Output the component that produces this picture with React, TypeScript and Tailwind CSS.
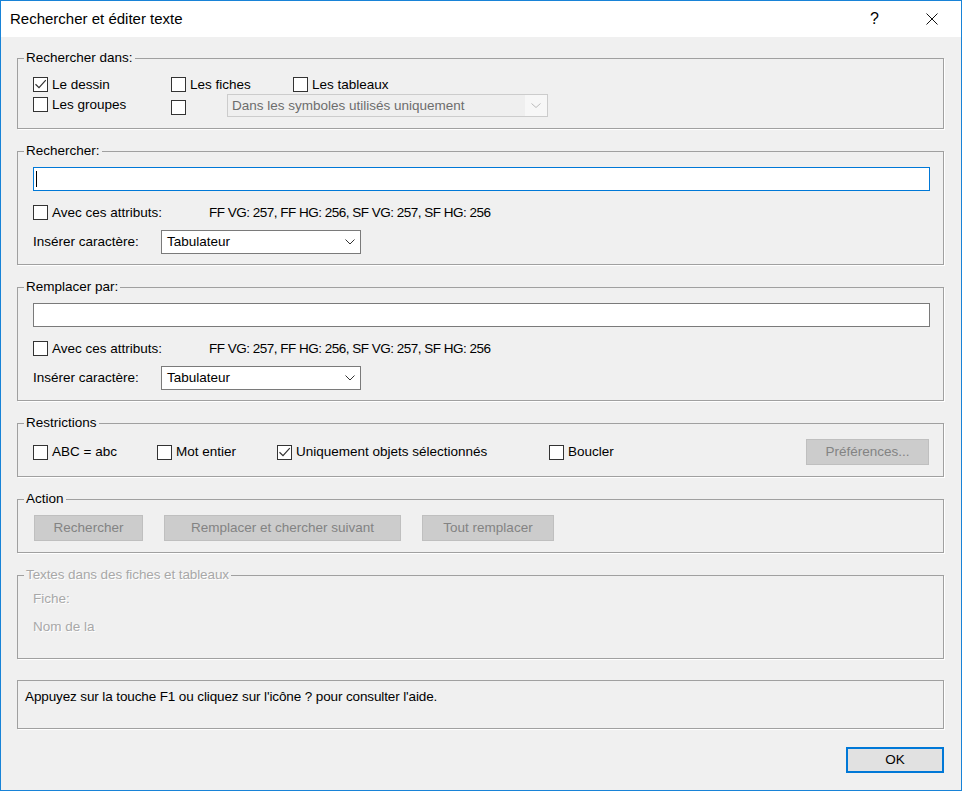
import React from 'react';

// Boîte de dialogue "Rechercher et éditer texte" (style Windows 10)

interface CheckProps {
  label?: string;
  checked?: boolean;
  className?: string;
}

function Check({ label, checked, className = '' }: CheckProps) {
  return (
    <label className={`flex items-center h-[15px] ${className}`}>
      <span className="relative w-[15px] h-[15px] shrink-0 border border-[#333333] bg-white">
        {checked && (
          <svg className="absolute left-0 top-0" width="13" height="13" viewBox="0 0 13 13">
            <path d="M1.5 6.2 L5 9.6 L11.8 2.2" fill="none" stroke="#333333" strokeWidth={1.2} />
          </svg>
        )}
      </span>
      {label && <span className="ml-[4px] whitespace-nowrap">{label}</span>}
    </label>
  );
}

interface GroupProps {
  title?: string;
  disabled?: boolean;
  className?: string;
  children: React.ReactNode;
}

function Group({ title, disabled, className = '', children }: GroupProps) {
  return (
    <fieldset className={`border border-[#a0a0a0] shadow-[1px_1px_0_#ffffff] ${className}`}>
      <legend
        className={`ml-[6px] px-[2px] h-[16px] leading-[16px] whitespace-nowrap ${
          disabled ? 'text-[#a8a8a8] tracking-[-0.1px] [text-shadow:1px_1px_0_#ffffff]' : ''
        }`}
      >
        {title}
      </legend>
      {children}
    </fieldset>
  );
}

function Combo({ value, className = '' }: { value: string; className?: string }) {
  return (
    <div className={`flex items-center h-[24px] border border-[#7a7a7a] bg-white ${className}`}>
      <span className="pl-[5px] flex-1">{value}</span>
      <svg className="mr-[5px]" width="10" height="6" viewBox="0 0 10 6">
        <path d="M0.5 0.5 L5 5 L9.5 0.5" fill="none" stroke="#333333" strokeWidth={1} />
      </svg>
    </div>
  );
}

function DisabledButton({ children, className = '' }: { children: React.ReactNode; className?: string }) {
  return (
    <div
      className={`h-[26px] flex items-center justify-center border border-[#bfbfbf] bg-[#cccccc] text-[#838383] whitespace-nowrap ${className}`}
    >
      {children}
    </div>
  );
}

function AttrRow() {
  return (
    <div className="flex items-center h-[15px] mt-[14px]">
      <Check label="Avec ces attributs:" className="w-[176px]" />
      <span className="whitespace-nowrap tracking-[-0.5px]">FF VG: 257, FF HG: 256, SF VG: 257, SF HG: 256</span>
    </div>
  );
}

function InsertRow() {
  return (
    <div className="flex items-center mt-[10px]">
      <span className="w-[128px]">Insérer caractère:</span>
      <Combo value="Tabulateur" className="w-[200px]" />
    </div>
  );
}

export default function App() {
  return (
    <div className="w-[962px] h-[791px] border border-[#1883d7] bg-[#f0f0f0] flex flex-col font-['Liberation_Sans',Arial,sans-serif] text-[13.5px] leading-[16px] text-black">
      {/* Barre de titre */}
      <div className="h-[36px] shrink-0 bg-white flex items-center">
        <span className="ml-[9px] text-[15px]">Rechercher et éditer texte</span>
        <span className="ml-auto text-[16px] leading-none">?</span>
        <svg className="ml-[47px] mr-[23px]" width="12" height="12" viewBox="0 0 12 12">
          <path d="M0.5 0.5 L11.5 11.5 M11.5 0.5 L0.5 11.5" stroke="#111111" strokeWidth={1} />
        </svg>
      </div>

      <div className="pl-[16px] pr-[17px] flex flex-col">
        {/* Rechercher dans */}
        <Group title="Rechercher dans:" className="mt-[13px]">
          <div className="pl-[15px] pt-[11px] pb-[11px]">
            <div className="flex h-[15px]">
              <Check checked label="Le dessin" className="w-[138px]" />
              <Check label="Les fiches" className="w-[122px]" />
              <Check label="Les tableaux" />
            </div>
            <div className="flex h-[23px] mt-[2px]">
              <Check label="Les groupes" className="w-[138px] mt-[3px]" />
              <Check className="mt-[6px]" />
              <div className="ml-[41px] w-[321px] h-[23px] flex border border-[#cccccc] bg-[#f7f7f7]">
                <span className="flex-1 bg-[#efefef] pl-[4px] flex items-center text-[#6d6d6d]">
                  Dans les symboles utilisés uniquement
                </span>
                <span className="w-[22px] flex items-center justify-center">
                  <svg width="10" height="5" viewBox="0 0 10 5">
                    <path d="M0.5 0.5 L5 4.5 L9.5 0.5" fill="none" stroke="#bcbcbc" strokeWidth={1} />
                  </svg>
                </span>
              </div>
            </div>
          </div>
        </Group>

        {/* Rechercher */}
        <Group title="Rechercher:" className="mt-[14px]">
          <div className="pl-[15px] pr-[13px] pt-[8px] pb-[10px]">
            <div className="h-[24px] border border-[#0078d7] bg-white flex items-center">
              <span className="ml-[2px] w-[1px] h-[16px] bg-black" />
            </div>
            <AttrRow />
            <InsertRow />
          </div>
        </Group>

        {/* Remplacer par */}
        <Group title="Remplacer par:" className="mt-[14px]">
          <div className="pl-[15px] pr-[13px] pt-[8px] pb-[10px]">
            <div className="h-[24px] border border-[#7a7a7a] bg-white" />
            <AttrRow />
            <InsertRow />
          </div>
        </Group>

        {/* Restrictions */}
        <Group title="Restrictions" className="mt-[14px]">
          <div className="flex items-center h-[26px] box-content pl-[15px] pr-[14px] pt-[8px] pb-[11px]">
            <Check label="ABC = abc" className="w-[124px]" />
            <Check label="Mot entier" className="w-[120px]" />
            <Check checked label="Uniquement objets sélectionnés" className="w-[272px]" />
            <Check label="Boucler" />
            <DisabledButton className="ml-auto w-[123px]">Préférences...</DisabledButton>
          </div>
        </Group>

        {/* Action */}
        <Group title="Action" className="mt-[14px]">
          <div className="flex gap-[21px] pl-[16px] pt-[8px] pb-[11px]">
            <DisabledButton className="w-[109px]">Rechercher</DisabledButton>
            <DisabledButton className="w-[237px]">Remplacer et chercher suivant</DisabledButton>
            <DisabledButton className="w-[132px]">Tout remplacer</DisabledButton>
          </div>
        </Group>

        {/* Textes dans des fiches et tableaux (désactivé) */}
        <Group title="Textes dans des fiches et tableaux" disabled className="mt-[14px]">
          <div className="pl-[15px] pt-[8px] pb-[23px] text-[#a8a8a8] [text-shadow:1px_1px_0_#ffffff]">
            <div>Fiche:</div>
            <div className="mt-[12px]">Nom de la</div>
          </div>
        </Group>

        {/* Aide */}
        <div className="mt-[21px] h-[49px] border border-[#a0a0a0] shadow-[1px_1px_0_#ffffff] pl-[7px] pt-[8px] tracking-[-0.12px]">
          Appuyez sur la touche F1 ou cliquez sur l'icône ? pour consulter l'aide.
        </div>

        <div className="mt-[18px] self-end w-[98px] h-[26px] border-2 border-[#0078d7] bg-[#e1e1e1] flex items-center justify-center">
          OK
        </div>
      </div>
    </div>
  );
}
